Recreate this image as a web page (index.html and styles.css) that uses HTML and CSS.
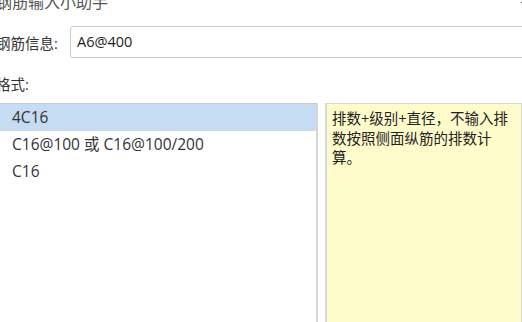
FILE: index.html
```html
<!DOCTYPE html>
<html lang="zh-CN">
<head>
    <meta charset="UTF-8">
    <title>钢筋输入小助手</title>
    <link rel="stylesheet" href="styles.css">
</head>
<body>
    <div class="dialog">
        <div class="title-bar">
            <span class="title">钢筋输入小助手</span>
            <svg class="close" width="14" height="14" viewBox="0 0 14 14">
                <path d="M1 1 L13 13 M13 1 L1 13" stroke="#777" stroke-width="1.2" fill="none"/>
            </svg>
        </div>

        <div class="info-row">
            <label class="info-label">钢筋信息:</label>
            <div class="info-input">A6@400</div>
        </div>

        <div class="format-label">格式:</div>

        <div class="panes">
            <ul class="format-list">
                <li class="selected">4C16</li>
                <li>C16@100 或 C16@100/200</li>
                <li>C16</li>
            </ul>
            <div class="hint">排数+级别+直径，不输入排<br>数按照侧面纵筋的排数计<br>算。</div>
        </div>
    </div>
</body>
</html>
```

FILE: styles.css
```css
body {
    margin: 0;
    width: 522px;
    height: 322px;
    overflow: hidden;
    background: #fff;
    font-family: "Open Sans", "Noto Sans CJK SC", "Microsoft YaHei", sans-serif;
    font-size: 14.5px;
    color: #333;
}
.dialog {
    margin-left: -4px;
    height: 322px;
}
.title-bar {
    display: flex;
    justify-content: space-between;
    height: 20px;
    margin-top: -8px;
    line-height: 20px;
}
.title {
    font-size: 16px;
    color: #555;
}
.close {
    flex-shrink: 0;
    margin-top: -2px;
    margin-right: -12px;
}
.info-row {
    display: flex;
    align-items: center;
    margin-top: 14px;
    height: 32px;
}
.info-label {
    width: 74px;
    color: #333;
}
.info-input {
    flex: 1;
    height: 30px;
    line-height: 30px;
    padding-left: 6px;
    margin-right: -10px;
    border: 1px solid #ccc;
    border-radius: 3px;
    color: #222;
}
.format-label {
    margin-top: 18px;
    height: 18px;
    line-height: 18px;
    color: #333;
}
.panes {
    display: flex;
    gap: 7px;
    margin-top: 9px;
    height: 230px;
}
.format-list {
    list-style: none;
    margin: 0;
    padding: 0;
    width: 319px;
    border: 1px solid #ccc;
    border-right: 2px solid #d6d6d6;
    font-size: 15.5px;
}
.format-list li {
    height: 27px;
    line-height: 27px;
    padding-left: 15px;
}
.format-list li.selected {
    background: #c6dcf2;
}
.hint {
    flex: 1;
    background: #fffccc;
    border: 1px solid #d9d9d9;
    border-left: 2px solid #d6d6d6;
    padding: 5px 0 0 5px;
    line-height: 19.5px;
    color: #222;
}
```
